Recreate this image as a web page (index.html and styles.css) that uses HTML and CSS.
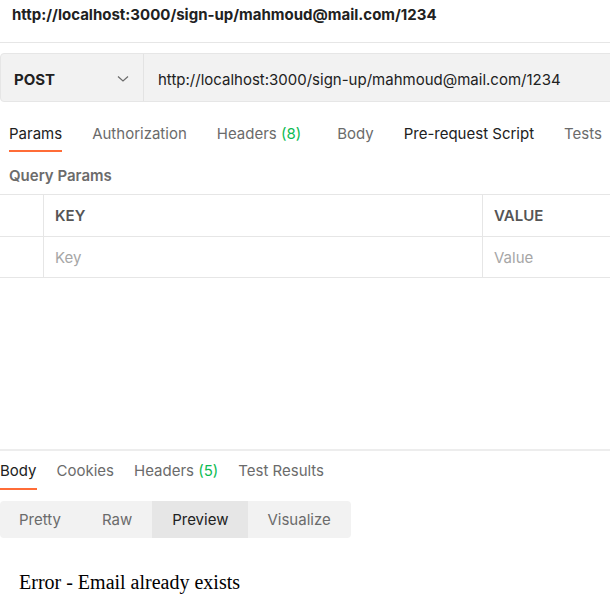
FILE: index.html
```html
<!DOCTYPE html>
<html>
<head>
<meta charset="utf-8">
<link rel="stylesheet" href="styles.css">
</head>
<body>
<div class="title">http://localhost:3000/sign-up/mahmoud@mail.com/1234</div>
<div class="reqbar">
  <div class="method">
    <span class="method-name">POST</span>
    <svg class="chev" width="12" height="8" viewBox="0 0 12 8"><path d="M1 1.5 L6 6 L11 1.5" fill="none" stroke="#6b6b6b" stroke-width="1.2"/></svg>
  </div>
  <div class="url">http://localhost:3000/sign-up/mahmoud@mail.com/1234</div>
</div>
<div class="tabs req-tabs">
  <div class="tab active">Params</div>
  <div class="tab">Authorization</div>
  <div class="tab">Headers <span class="count">(8)</span></div>
  <div class="tab tab-body">Body</div>
  <div class="tab dark">Pre-request Script</div>
  <div class="tab">Tests</div>
</div>
<div class="section-label">Query Params</div>
<div class="table">
  <div class="row head">
    <div class="cell c1"></div>
    <div class="cell c2">KEY</div>
    <div class="cell c3">VALUE</div>
  </div>
  <div class="row">
    <div class="cell c1"></div>
    <div class="cell c2 ph">Key</div>
    <div class="cell c3 ph">Value</div>
  </div>
</div>
<div class="response">
  <div class="tabs res-tabs">
    <div class="tab active dark">Body</div>
    <div class="tab">Cookies</div>
    <div class="tab">Headers <span class="count">(5)</span></div>
    <div class="tab">Test Results</div>
  </div>
  <div class="seg">
    <div class="seg-item">Pretty</div>
    <div class="seg-item">Raw</div>
    <div class="seg-item on">Preview</div>
    <div class="seg-item">Visualize</div>
  </div>
  <div class="preview">Error - Email already exists</div>
</div>
</body>
</html>
```
FILE: styles.css
```css
html, body {
  margin: 0;
  padding: 0;
  background: #ffffff;
  overflow: hidden;
}
body {
  font-family: Inter, "Noto Sans", sans-serif;
  font-size: 15px;
  color: #212121;
  width: 610px;
}
.title {
  height: 43px;
  box-sizing: border-box;
  padding: 5px 12px 0;
  line-height: 20px;
  font-weight: 700;
  border-bottom: 1px solid #e6e6e6;
}
.reqbar {
  margin-top: 10px;
  display: flex;
  height: 49px;
  box-sizing: border-box;
  width: 640px;
  background: #f2f2f2;
  border: 1px solid #e6e6e6;
  border-radius: 4px 0 0 4px;
}
.method {
  width: 143px;
  box-sizing: border-box;
  display: flex;
  align-items: center;
  justify-content: space-between;
  padding: 3px 14px 0 13px;
  border-right: 1px solid #e3e3e3;
  flex-shrink: 0;
}
.method-name {
  font-weight: 700;
}
.chev {
  display: block;
}
.url {
  display: flex;
  align-items: center;
  padding: 3px 0 0 14px;
  white-space: nowrap;
}
.tabs {
  display: flex;
  gap: 30px;
}
.tab {
  line-height: 20px;
  padding-bottom: 6px;
  border-bottom: 2px solid transparent;
  color: #6b6b6b;
  white-space: nowrap;
}
.tab.active {
  color: #212121;
  border-bottom-color: #ff6c37;
}
.tab.dark {
  color: #212121;
}
.count {
  color: #0cbb52;
}
.req-tabs {
  margin-top: 22px;
  padding-left: 9px;
}
.req-tabs .tab-body {
  margin-left: 6px;
}
.section-label {
  margin-top: 14px;
  padding-left: 9px;
  line-height: 20px;
  font-weight: 600;
  color: #6b6b6b;
}
.table {
  margin-top: 8px;
  border-top: 1px solid #e6e6e6;
}
.row {
  display: flex;
  height: 41px;
  box-sizing: border-box;
  border-bottom: 1px solid #e6e6e6;
}
.row.head {
  height: 42px;
}
.cell {
  display: flex;
  align-items: center;
  box-sizing: border-box;
}
.c1 {
  width: 44px;
  border-right: 1px solid #e6e6e6;
}
.c2 {
  width: 439px;
  border-right: 1px solid #e6e6e6;
  padding-left: 11px;
}
.c3 {
  flex: 1;
  padding-left: 11px;
}
.head .cell {
  font-weight: 600;
  color: #555555;
}
.ph {
  color: #a6a6a6;
}
.response {
  margin-top: 171px;
  border-top: 2px solid #ededed;
}
.res-tabs {
  padding-top: 10px;
  gap: 20px;
}
.res-tabs .tab {
  padding-bottom: 7px;
}
.seg {
  margin-top: 11px;
  display: flex;
  width: 351px;
  height: 37px;
  background: #f2f2f2;
  border-radius: 4px;
  overflow: hidden;
}
.seg-item {
  display: flex;
  align-items: center;
  padding: 0 20px 0 19px;
  color: #6b6b6b;
}
.seg-item:nth-child(2) {
  padding-left: 21px;
}
.seg-item.on {
  padding-left: 20px;
  background: #e6e6e6;
  color: #212121;
}
.preview {
  margin-top: 33px;
  padding-left: 19px;
  font-family: "Liberation Serif", "Times New Roman", serif;
  font-size: 20px;
  line-height: 23px;
  color: #000000;
}
```
